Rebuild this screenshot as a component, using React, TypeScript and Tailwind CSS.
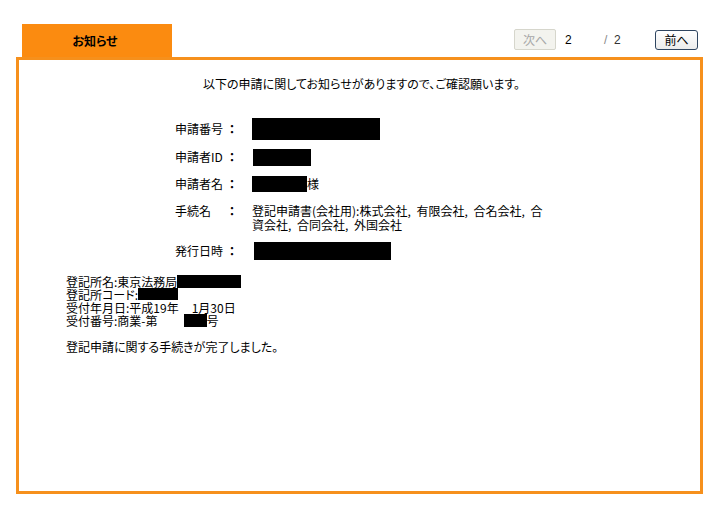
import React from "react";

const Box = ({ w, h, className = "" }: { w: string; h: string; className?: string }) => (
  <span className={`inline-block bg-black align-top ${w} ${h} ${className}`} />
);

export default function App() {
  return (
    <div className="w-[723px] h-[511px] bg-white text-black text-[12px] font-['Noto_Sans_CJK_JP',sans-serif] [font-feature-settings:'palt']">
      <div className="flex items-start justify-between pt-[24px] pl-[22px] pr-[25px]">
        <div className="w-[150px] h-[33px] bg-[#fb8b10] flex items-center justify-center font-bold text-[12px] pr-[4px]">
          お知らせ
        </div>
        <div className="flex items-center mt-[5px] w-[184px] font-['Liberation_Sans','Noto_Sans_CJK_JP',sans-serif]">
          <button
            disabled
            className="w-[42px] h-[21px] border border-[#d6d6cc] bg-[#f3f3ee] text-[#a8a8a8] rounded-[2px] text-[12px] font-['Noto_Sans_CJK_JP',sans-serif]"
          >
            次へ
          </button>
          <span className="ml-[9px] w-[39px] text-[12px]">2</span>
          <span className="w-[51px] text-[12px] text-[#333]">
            <span className="text-[#888]">/</span>&nbsp;&nbsp;2
          </span>
          <button className="w-[43px] h-[20px] border border-[#2f4560] bg-gradient-to-b from-white to-[#ececec] rounded-[3px] text-[12px] font-['Noto_Sans_CJK_JP',sans-serif]">
            前へ
          </button>
        </div>
      </div>

      <div className="ml-[16px] w-[687px] h-[437px] border-[3px] border-[#f6901c]">
        <p className="pt-[17px] text-center leading-[14px] pl-[4px]">
          以下の申請に関してお知らせがありますので、ご確認願います。
        </p>

        <div className="pl-[156px]">
          <div className="mt-[26px] flex items-center h-[24px]">
            <span className="w-[54px]">申請番号</span>
            <span className="w-[23px] font-bold">：</span>
            <Box w="w-[128px]" h="h-[22px]" />
          </div>
          <div className="mt-[4px] flex items-center h-[24px]">
            <span className="w-[54px]">申請者ID</span>
            <span className="w-[23px] font-bold">：</span>
            <Box w="w-[58px]" h="h-[17px]" className="ml-[1px]" />
          </div>
          <div className="mt-[3px] flex items-center h-[24px]">
            <span className="w-[54px]">申請者名</span>
            <span className="w-[23px] font-bold">：</span>
            <Box w="w-[55px]" h="h-[16px]" />
            <span>様</span>
          </div>
          <div className="mt-[8px] flex items-start leading-[14px]">
            <span className="w-[54px]">手続名</span>
            <span className="w-[23px] font-bold">：</span>
            <span className="[word-spacing:3px]">
              登記申請書(会社用):株式会社, 有限会社, 合名会社, 合
              <br />
              資会社, 合同会社, 外国会社
            </span>
          </div>
          <div className="mt-[7px] flex items-center h-[24px]">
            <span className="w-[54px]">発行日時</span>
            <span className="w-[23px] font-bold">：</span>
            <Box w="w-[137px]" h="h-[18px]" className="ml-[2px]" />
          </div>
        </div>

        <div className="pl-[47px] mt-[12px] leading-[13px]">
          <p>
            登記所名:東京法務局
            <Box w="w-[64px]" h="h-[13px]" />
          </p>
          <p>
            登記所コード:
            <Box w="w-[40px]" h="h-[12px]" />
          </p>
          <p>
            受付年月日:平成19年
            <span className="inline-block w-[13px]" />
            1月30日
          </p>
          <p>
            受付番号:商業-第
            <span className="inline-block w-[26px]" />
            <Box w="w-[23px]" h="h-[13px]" />号
          </p>
          <p className="mt-[13px]">登記申請に関する手続きが完了しました。</p>
        </div>
      </div>
    </div>
  );
}
